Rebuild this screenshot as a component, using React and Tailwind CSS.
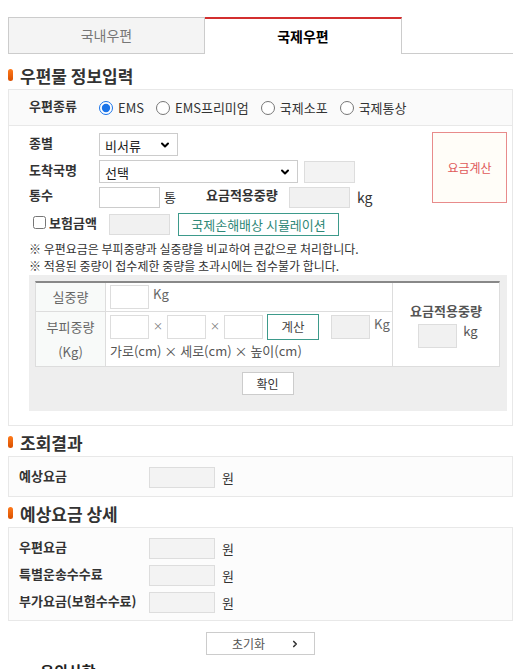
import { ChevronDown, ChevronRight } from "lucide-react";

const font = { fontFamily: '"Noto Sans CJK KR", "Noto Sans", sans-serif' };

function SectionTitle({ children }) {
  return (
    <div className="flex items-center gap-[7px] h-[28px]">
      <span className="w-[5px] h-[12px] rounded-full bg-gradient-to-b from-[#ff7a1a] to-[#d94f00]" />
      <h2 className="text-[17px] font-bold text-[#333] leading-none">{children}</h2>
    </div>
  );
}

function GrayBox({ className = "" }) {
  return <span className={`block h-[21px] w-[66px] bg-[#f3f3f3] border border-[#ddd] ${className}`} />;
}

function Radio({ label, checked }) {
  return (
    <label className="flex items-center gap-[5px] text-[13px] text-[#333]">
      <input type="radio" name="kind" defaultChecked={checked} className="w-[14px] h-[14px] m-0 accent-[#1a73e8]" />
      {label}
    </label>
  );
}

function Select({ value, width }) {
  return (
    <div className={`relative ${width} h-[23px] border border-[#ccc] bg-white`}>
      <span className="absolute left-[5px] top-[2px] text-[13px] text-[#222]">{value}</span>
      <ChevronDown className="absolute right-[6px] top-[5px] w-[12px] h-[12px] text-black" strokeWidth={4} />
    </div>
  );
}

function FeeRow({ label }) {
  return (
    <div className="flex items-center">
      <span className="w-[130px] text-[13px] font-bold text-[#333] -mt-[3px]">{label}</span>
      <GrayBox />
      <span className="ml-[7px] text-[13px] text-[#333]">원</span>
    </div>
  );
}

export default function App() {
  return (
    <div style={font} className="w-full px-2 pt-[17px] bg-white text-[#333]">
      {/* Tabs */}
      <div className="flex h-[37px]">
        <div className="w-[197px] flex items-center justify-center bg-[#f4f4f4] border border-[#ccc] text-[14px] text-[#777]">
          국내우편
        </div>
        <div className="w-[197px] flex items-center justify-center bg-white border-t-2 border-t-[#d32f2f] border-r border-[#ccc] text-[14px] font-bold text-black">
          국제우편
        </div>
        <div className="flex-1 border-b border-[#ccc]" />
      </div>

      <div className="mt-[7px]">
        <SectionTitle>우편물 정보입력</SectionTitle>
      </div>

      {/* Box 1 */}
      <div className="border border-[#e8e8e8]">
        <div className="flex items-center h-[36px] bg-[#fafafa] border-b border-[#e8e8e8] pl-5">
          <span className="w-[70px] text-[13px] font-bold text-[#333] -mt-[3px]">우편종류</span>
          <div className="flex items-center gap-[12px]">
            <Radio label="EMS" checked />
            <Radio label="EMS프리미엄" />
            <Radio label="국제소포" />
            <Radio label="국제통상" />
          </div>
        </div>

        <div className="pl-5 pr-[5px] pt-[6px] pb-[14px]">
          <div className="flex justify-between">
            <div className="flex flex-col gap-[3px] pt-[1px]">
              <div className="flex items-center h-[23px]">
                <span className="w-[70px] text-[13px] font-bold -mt-[4px]">종별</span>
                <Select value="비서류" width="w-[79px]" />
              </div>
              <div className="flex items-center h-[23px] mt-[1px]">
                <span className="w-[70px] text-[13px] font-bold -mt-[4px]">도착국명</span>
                <Select value="선택" width="w-[199px]" />
                <span className="ml-[6px] h-[22px] w-[51px] bg-[#f3f3f3] border border-[#ddd]" />
              </div>
              <div className="flex items-center h-[22px]">
                <span className="w-[70px] text-[13px] font-bold -mt-[4px]">통수</span>
                <span className="h-[21px] w-[61px] border border-[#ccc] bg-white" />
                <span className="ml-[4px] text-[13px]">통</span>
                <span className="ml-[30px] w-[83px] text-[13px] font-bold -mt-[4px]">요금적용중량</span>
                <span className="h-[21px] w-[61px] bg-[#f1f1f1] border border-[#ddd]" />
                <span className="ml-[7px] text-[14px]">kg</span>
              </div>
              <div className="flex items-center h-[25px] mt-[1px]">
                <label className="flex items-center gap-[3px] w-[80px] pl-[4px] -mt-[4px]">
                  <input type="checkbox" className="w-[13px] h-[13px] m-0" />
                  <span className="text-[13px] font-bold">보험금액</span>
                </label>
                <span className="h-[21px] w-[61px] bg-[#f1f1f1] border border-[#ddd]" />
                <button className="ml-[8px] h-[23px] w-[161px] border border-[#3d9a8b] bg-white text-[13px] text-[#2f8877]">
                  국제손해배상 시뮬레이션
                </button>
              </div>
            </div>
            <button className="w-[75px] h-[71px] border border-[#e88b8b] bg-[#fffdf8] text-[12px] text-[#e05a5a]">
              요금계산
            </button>
          </div>

          <p className="mt-[3px] text-[12px] leading-[17px] text-[#333]">※ 우편요금은 부피중량과 실중량을 비교하여 큰값으로 처리합니다.</p>
          <p className="text-[12px] leading-[17px] text-[#333]">※ 적용된 중량이 접수제한 중량을 초과시에는 접수불가 합니다.</p>

          {/* Gray panel */}
          <div className="mt-[1px] bg-[#eee] pl-[6px] pr-[7px] pt-[6px] pb-[16px]">
            <div className="flex border-t-2 border-t-[#888] bg-white border-x border-b border-[#ddd]">
              <div className="flex-1 flex flex-col">
                <div className="flex h-[29px] border-b border-[#ddd]">
                  <div className="w-[70px] bg-[#f8faf9] border-r border-[#ddd] flex items-center justify-center text-[13px] text-[#666]">
                    실중량
                  </div>
                  <div className="flex items-center pl-[4px]">
                    <span className="h-[24px] w-[39px] border border-[#ddd]" />
                    <span className="ml-[4px] -mt-[6px] text-[13px] text-[#666]">Kg</span>
                  </div>
                </div>
                <div className="flex h-[54px]">
                  <div className="w-[70px] bg-[#f8faf9] border-r border-[#ddd] flex flex-col items-center justify-center text-[13px] text-[#666] leading-[25px]">
                    <span>부피중량</span>
                    <span>(Kg)</span>
                  </div>
                  <div className="flex flex-col pl-[4px] pt-[2px]">
                    <div className="flex items-center h-[26px]">
                      <span className="h-[24px] w-[39px] border border-[#ddd]" />
                      <span className="w-[18px] text-center text-[10px] text-[#777] -mt-[4px]">×</span>
                      <span className="h-[24px] w-[39px] border border-[#ddd]" />
                      <span className="w-[18px] text-center text-[10px] text-[#777] -mt-[4px]">×</span>
                      <span className="h-[24px] w-[39px] border border-[#ddd]" />
                      <button className="ml-[4px] h-[26px] w-[52px] border border-[#3d9a8b] bg-white text-[12.5px] text-[#444]">
                        계산
                      </button>
                      <span className="ml-[12px] h-[24px] w-[39px] bg-[#f1f1f1] border border-[#ddd]" />
                      <span className="ml-[4px] -mt-[6px] text-[13px] text-[#666]">Kg</span>
                    </div>
                    <span className="mt-[1px] text-[13px] text-[#555]">가로(cm) × 세로(cm) × 높이(cm)</span>
                  </div>
                </div>
              </div>
              <div className="w-[107px] border-l border-[#ddd] flex flex-col items-center justify-center">
                <span className="text-[13px] font-bold text-[#555]">요금적용중량</span>
                <div className="flex items-center mt-[3px] ml-[4px]">
                  <span className="h-[24px] w-[39px] bg-[#f1f1f1] border border-[#ddd]" />
                  <span className="ml-[6px] -mt-[10px] text-[13px] text-[#555]">kg</span>
                </div>
              </div>
            </div>
            <div className="flex justify-center mt-[5px]">
              <button className="h-[23px] w-[52px] border border-[#ccc] bg-white text-[12px] text-[#333]">
                확인
              </button>
            </div>
          </div>
        </div>
      </div>

      <div className="mt-[2px]">
        <SectionTitle>조회결과</SectionTitle>
      </div>
      <div className="border border-[#e8e8e8] bg-[#fcfcfc] pl-[10px] pt-[10px] pb-[8px]">
        <FeeRow label="예상요금" />
      </div>

      <div className="mt-[2px]">
        <SectionTitle>예상요금 상세</SectionTitle>
      </div>
      <div className="border border-[#e8e8e8] bg-[#fcfcfc] pl-[10px] pt-[10px] pb-[7px] flex flex-col gap-[6px]">
        <FeeRow label="우편요금" />
        <FeeRow label="특별운송수수료" />
        <FeeRow label="부가요금(보험수수료)" />
      </div>

      <div className="flex justify-center mt-[11px]">
        <button className="relative h-[23px] w-[109px] border border-[#ccc] bg-white text-[12px] text-[#555]">
          <span className="-ml-[24px]">초기화</span>
          <ChevronRight className="absolute right-[14px] top-[6px] w-[10px] h-[10px] text-[#333]" strokeWidth={4} />
        </button>
      </div>

      <div className="mt-[5px] pl-[20px] text-[15px] font-bold text-[#222] h-[20px]">· 유의사항</div>
    </div>
  );
}
